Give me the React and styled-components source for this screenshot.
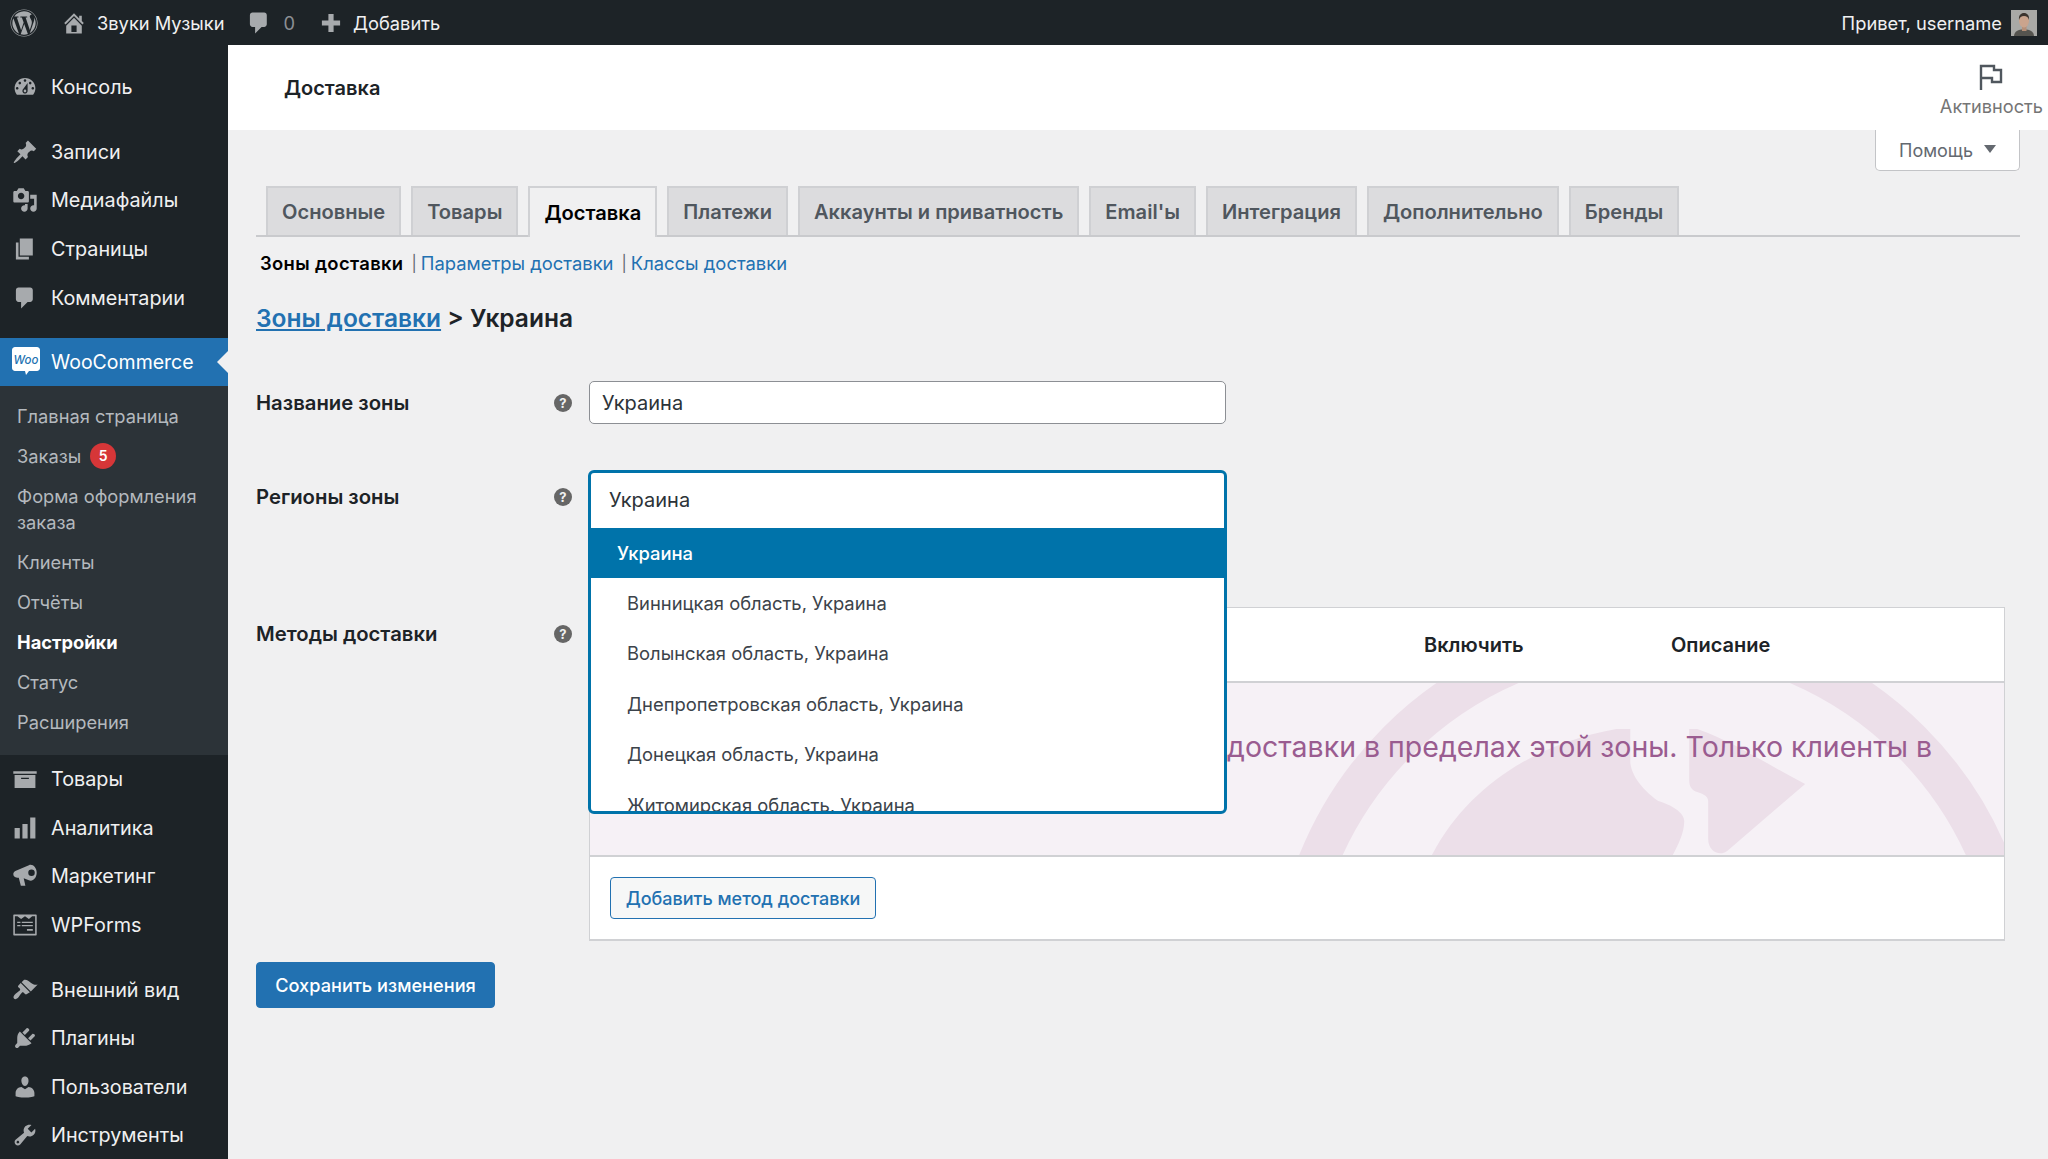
import React from 'react';
import styled, { createGlobalStyle } from 'styled-components';
import { FaWordpress } from 'react-icons/fa';

const GlobalStyle = createGlobalStyle`
  html, body {
    margin: 0;
    height: 100%;
    overflow: hidden;
    background: #f0f0f1;
    font-family: Inter, "Noto Sans", "Liberation Sans", sans-serif;
    -webkit-font-smoothing: antialiased;
  }
  * { box-sizing: border-box; }
`

const ICONS = {
  home: 'M16 8.5l1.53 1.53-1.06 1.06L10 4.62l-6.47 6.47-1.06-1.06L10 2.5l4 4v-2h2v4zm-6-2.46l6 5.99V18H4v-5.97zM12 17v-5H8v5h4z',
  dashboard: 'M3.76 16h12.48c1.1-1.37 1.76-3.11 1.76-5 0-4.42-3.58-8-8-8s-8 3.58-8 8c0 1.89.66 3.63 1.76 5zM10 4c.55 0 1 .45 1 1s-.45 1-1 1-1-.45-1-1 .45-1 1-1zM6 6c.55 0 1 .45 1 1s-.45 1-1 1-1-.45-1-1 .45-1 1-1zm8 0c.55 0 1 .45 1 1s-.45 1-1 1-1-.45-1-1 .45-1 1-1zm-5.37 5.55L12 7v6c0 1.1-.9 2-2 2s-2-.9-2-2c0-.57.24-1.08.63-1.45zM4 10c.55 0 1 .45 1 1s-.45 1-1 1-1-.45-1-1 .45-1 1-1zm12 0c.55 0 1 .45 1 1s-.45 1-1 1-1-.45-1-1 .45-1 1-1zm-5 3c0-.55-.45-1-1-1s-1 .45-1 1 .45 1 1 1 1-.45 1-1z',
  pin: 'M10.44 3.02l1.82-1.82 6.36 6.35-1.83 1.82c-1.05-.68-2.48-.57-3.41.36l-.75.75c-.92.93-1.04 2.35-.35 3.41l-1.83 1.82-2.41-2.41-2.8 2.79c-.42.42-3.38 2.71-3.8 2.29s1.86-3.39 2.28-3.81l2.79-2.79L4.1 9.36l1.83-1.82c1.05.69 2.48.57 3.4-.36l.75-.75c.93-.92 1.05-2.35.36-3.41z',
  media: 'M13 11V4c0-.55-.45-1-1-1h-1.67L9 1H5L3.67 3H2c-.55 0-1 .45-1 1v7c0 .55.45 1 1 1h10c.55 0 1-.45 1-1zM7 4.5c1.38 0 2.5 1.12 2.5 2.5S8.38 9.5 7 9.5 4.5 8.38 4.5 7 5.62 4.5 7 4.5zM14 6h5v10.5c0 1.38-1.12 2.5-2.5 2.5S14 17.88 14 16.5s1.12-2.5 2.5-2.5c.17 0 .34.02.5.05V9h-3V6zm-4 8.05V13h2v3.5c0 1.38-1.12 2.5-2.5 2.5S7 17.88 7 16.5 8.12 14 9.5 14c.17 0 .34.02.5.05z',
  pages: 'M6 15V2h10v13H6zm-1 1h8v2H3V5h2v11z',
  comment: 'M5 2h9c1.1 0 2 .9 2 2v7c0 1.1-.9 2-2 2h-2l-5 5v-5H5c-1.1 0-2-.9-2-2V4c0-1.1.9-2 2-2z',
  products: 'M19 4v2H1V4h18zM2 7h16v10H2V7zm11 3V9H7v1h6z',
  analytics: 'M18 18V2h-4v16h4zm-6 0V7H8v11h4zm-6 0v-8H2v8h4z',
  marketing: 'M3 6L13 1.7c2.8-1.200 6 1.800 6 5.800s-3 7-6 5.800L9 11.800 10.300 17.500H6.800L5.200 11.300H4c-2 0-3-1.300-3-2.800C1 7.300 2 6.400 3 6zM15 5a2.500 2.500 0 1 0 .01 5 2.500 2.500 0 1 0-.01-5z',
  forms: 'M1.500 2h17c.3 0 .5.2.5.5v15c0 .3-.2.5-.5.5h-17c-.3 0-.5-.2-.5-.5v-15c0-.3.2-.5.5-.5zm.7 1.200v13.600h15.600V3.200h-2.300L13 5.300l-3-2.100-3 2.100-2.800-2.100H2.200zM4 7.500h2.500v1H4v-1zm3.500 0H16v1H7.500v-1zM4 10h2.500v1H4v-1zm3.500 0H16v1H7.500v-1zm4 3H16v1.500h-4.500V13z',
  brush: 'M14.48 11.06L7.41 3.99l1.5-1.5c.5-.56 2.3-.47 3.51.32 1.21.8 1.43 1.28 2.91 2.1 1.18.64 2.45 1.26 4.45.85zm-.71.71L6.7 4.7 4.93 6.47c-.39.39-.39 1.02 0 1.41l1.06 1.06c.39.39.39 1.03 0 1.42-.6.6-1.43 1.11-2.21 1.69-.35.26-.7.53-1.01.84-1.4 1.400-2 2.600-1.400 3.500.7 1 1.900.900 3.100-.2.500-.5.900-1.200 1.300-1.800.5-.8 1.100-1.600 1.800-2.300.39-.39 1.030-.39 1.420 0l1.060 1.060c.39.39 1.020.39 1.410 0z',
  plugin: 'M13.11 4.36L9.87 7.6 8 5.73l3.24-3.24c.35-.34 1.05-.2 1.56.32.52.51.66 1.21.31 1.55zm-8 1.77l.91-1.12 9.01 9.01-1.19.84c-.71.71-2.63 1.16-3.82 1.16H6.14L4.9 17.26c-.59.59-1.54.59-2.12 0-.59-.58-.59-1.53 0-2.12l1.24-1.24v-3.88c0-1.13.4-3.19 1.09-3.89zm7.26 3.97l3.24-3.24c.34-.35 1.04-.21 1.55.31.52.51.66 1.21.31 1.55l-3.24 3.25z',
  users: 'M10 9.25c-2.27 0-2.73-3.44-2.73-3.44C7 4.02 7.82 2 9.97 2c2.16 0 2.98 2.02 2.71 3.81 0 0-.41 3.44-2.68 3.44zm0 2.57L12.72 10c2.39 0 4.52 2.33 4.52 4.53v2.49s-3.65 1.13-7.24 1.13c-3.65 0-7.24-1.13-7.24-1.13v-2.49c0-2.25 1.94-4.48 4.47-4.48z',
  tools: 'M16.68 9.77c-1.34 1.34-3.3 1.67-4.95.99l-5.41 6.52c-.99.99-2.59.99-3.58 0s-.99-2.59 0-3.57l6.52-5.42c-.68-1.65-.35-3.61.99-4.95 1.28-1.28 3.12-1.62 4.72-1.06l-2.89 2.89 2.82 2.82 2.86-2.87c.53 1.58.18 3.39-1.08 4.67zM3.81 16.21c.4.39 1.04.39 1.43 0 .4-.4.4-1.04 0-1.43-.39-.4-1.03-.4-1.43 0-.39.39-.39 1.03 0 1.43z',
  plus: 'M8 3h4v5h5v4h-5v5H8v-5H3V8h5z',
}

const Dashicon = ({ name, size = 26, color = '#a7aaad' }) => (
  <svg width={size} height={size} viewBox="0 0 20 20" fill={color} style={{ flexShrink: 0 }}>
    <path d={ICONS[name]} />
  </svg>
)

const WooIcon = () => (
  <svg width="28" height="29" viewBox="0 0 28 29" style={{ flexShrink: 0 }}>
    <path d="M3 0h22c1.600 0 3 1.400 3 3v18c0 1.600-1.400 3-3 3h-8l-3 4-1-4H3c-1.600 0-3-1.400-3-3V3c0-1.600 1.400-3 3-3z" fill="#fff" />
    <text x="14" y="16.500" textAnchor="middle" fontSize="11.500" fontWeight="500" fontStyle="italic" fontFamily="Inter, sans-serif" fill="#2271b1">Woo</text>
  </svg>
)

const Avatar = () => (
  <svg width="26" height="26" viewBox="0 0 26 26">
    <rect width="26" height="26" fill="#a9a9a6" />
    <path d="M3 26c.5-5 4-6.500 10-6.500S22.500 21 23 26z" fill="#55544f" />
    <rect x="11" y="16" width="4.500" height="5" fill="#b58f78" />
    <ellipse cx="13" cy="11" rx="5" ry="6.500" fill="#caa48d" />
    <path d="M8 10c-.5-5 2-7 5-7s5.500 2 5 7c-1-3-2-4-5-4s-4 1-5 4z" fill="#3b342e" />
  </svg>
)

const Watermark = () => (
  <WatermarkSvg viewBox="0 0 1415 172" preserveAspectRatio="none">
    <circle cx="1065" cy="315" r="363" fill="none" stroke="#ecdfe9" strokeWidth="40" />
    <path d="M842 173C880 100 950 60 1027 46h14v32c0 10 8 26 28 40 14 4 26 12 26 20 0 12-6 24-12 35z" fill="#ecdfe9" />
    <path d="M1100 46h8c40 14 74 38 108 55l-78 67c-8 6-19 0-19-12v-38c0-6-8-8-11-9-6-2-8-6-8-12z" fill="#ecdfe9" />
  </WatermarkSvg>
)

const Page = styled.div`
  display: flex;
  flex-direction: column;
  height: 100vh;
`

const AdminBar = styled.header`
  display: flex;
  align-items: center;
  flex: 0 0 45px;
  padding: 0 11px 0 10px;
  background: #1d2327;
  color: #f0f0f1;
  font-size: 18.300px;
`

const BarItem = styled.span`
  display: flex;
  align-items: center;
  gap: ${p => p.$gap || 10}px;
  margin-left: ${p => p.$left || 0}px;
`

const BarCount = styled.span`
  color: #8c8f94;
`

const Spacer = styled.div`
  flex: 1;
`

const Body = styled.div`
  display: flex;
  flex: 1;
  min-height: 0;
`

const Sidebar = styled.nav`
  flex: 0 0 228px;
  padding-top: 18px;
  background: #1d2327;
  overflow: hidden;
`

const MenuGroup = styled.div`
  margin-bottom: ${p => p.$last ? 0 : 16}px;
`

const MenuItem = styled.div`
  position: relative;
  display: flex;
  align-items: center;
  gap: ${p => p.$active ? 11 : 13}px;
  height: ${p => p.$active ? 48 : 48.6}px;
  padding-left: 12px;
  font-size: ${p => p.$active ? 19.5 : 19.8}px;
  color: ${p => p.$active ? '#fff' : '#f0f0f1'};
  background: ${p => p.$active ? '#2271b1' : 'transparent'};
`

const ActiveCaret = styled.span`
  position: absolute;
  right: 0;
  top: 50%;
  margin-top: -11px;
  border: 11px solid transparent;
  border-right-color: #f0f0f1;
  border-left-width: 0;
`

const Submenu = styled.div`
  padding: 10px 0 13px;
  background: #2c3338;
`

const SubItem = styled.div`
  display: flex;
  align-items: center;
  gap: 9px;
  padding: 7px 10px 7px 17px;
  font-size: 18.300px;
  line-height: 26px;
  font-weight: ${p => p.$current ? 700 : 400};
  color: ${p => p.$current ? '#fff' : '#b4b9be'};
`

const CountBadge = styled.span`
  display: inline-flex;
  align-items: center;
  justify-content: center;
  width: 26px;
  height: 26px;
  border-radius: 50%;
  background: #d63638;
  color: #fff;
  font-size: 14px;
  font-weight: 600;
`

const Main = styled.main`
  flex: 1;
  min-width: 0;
`

const PageHeader = styled.div`
  display: flex;
  align-items: center;
  justify-content: space-between;
  height: 85px;
  background: #fff;
`

const PageTitle = styled.h1`
  margin: 0 0 0 56px;
  font-size: 20px;
  font-weight: 600;
  color: #1d2327;
`

const ActivityButton = styled.div`
  display: flex;
  flex-direction: column;
  align-items: center;
  gap: 5px;
  padding: 6px 5px 0 0;
  font-size: 18.200px;
  color: #757575;
`

const Content = styled.div`
  padding: 0 28px;
`

const HelpRow = styled.div`
  display: flex;
  justify-content: flex-end;
`

const HelpButton = styled.div`
  display: flex;
  align-items: center;
  gap: 11px;
  height: 41px;
  width: 145px;
  padding-left: 23px;
  background: #fff;
  border: 1px solid #c3c4c7;
  border-top: 0;
  border-radius: 0 0 5px 5px;
  font-size: 18px;
  color: #646970;
`

const HelpCaret = styled.span`
  border: 6px solid transparent;
  border-top: 8px solid #646970;
  border-bottom: 0;
  margin-top: -3px;
`

const TabBar = styled.div`
  display: flex;
  gap: 10px;
  height: 51px;
  margin-top: 15px;
  padding-left: 10px;
  border-bottom: 2px solid #c9cacd;
`

const Tab = styled.div`
  display: flex;
  align-items: center;
  height: ${p => p.$active ? 51 : 49}px;
  padding: 0 14px;
  border: 2px solid ${p => p.$active ? '#d0d1d4' : '#cfd0d3'};
  border-bottom: 0;
  background: ${p => p.$active ? '#f0f0f1' : '#dcdcde'};
  font-size: 20.100px;
  font-weight: 600;
  color: ${p => p.$active ? '#000' : '#50575e'};
`

const SubNav = styled.div`
  display: flex;
  margin: 14px 0 0 4px;
  line-height: 24px;
  font-size: 18.400px;
  color: #646970;
`

const SubNavLink = styled.a`
  color: ${p => p.$current ? '#000' : '#2271b1'};
  font-weight: ${p => p.$current ? 600 : 400};
  letter-spacing: ${p => p.$current ? '.35px' : 0};
  text-decoration: none;
`

const SubNavDivider = styled.span`
  margin: 0 4px 0 8px;
  font-size: 16px;
`

const Heading = styled.h2`
  margin: 28px 0 48px;
  font-size: 24.500px;
  line-height: 30px;
  font-weight: 600;
  color: #1d2327;
`

const HeadingLink = styled.a`
  color: #2271b1;
  text-decoration: underline;
`

const FormRow = styled.div`
  display: grid;
  grid-template-columns: 333px 1fr;
  align-items: ${p => p.$top ? 'start' : 'center'};
  margin-bottom: ${p => p.$space}px;
`

const LabelCell = styled.div`
  display: flex;
  align-items: center;
  justify-content: space-between;
  padding: ${p => p.$top ? 14 : 0}px 17px ${p => p.$lift ? 4 : 0}px 0;
`

const FieldLabel = styled.label`
  font-size: 20.300px;
  font-weight: 600;
  color: #1d2327;
`

const HelpTip = styled.span`
  display: inline-flex;
  align-items: center;
  justify-content: center;
  width: 18px;
  height: 18px;
  border-radius: 50%;
  background: #666;
  color: #f0f0f1;
  font-size: 13px;
  font-weight: 700;
`

const TextField = styled.div`
  display: flex;
  align-items: center;
  width: 637px;
  height: 43px;
  padding: 0 12px;
  background: #fff;
  border: 1px solid #8c8f94;
  border-radius: 5px;
  font-size: 20px;
  color: #2c3338;
`

const SelectWrap = styled.div`
  position: relative;
  width: 639px;
  height: 57px;
  margin-left: -1px;
  z-index: 2;
`

const SelectBox = styled.div`
  position: absolute;
  inset: 0 0 auto 0;
  height: 344px;
  border: 3px solid #0073aa;
  border-radius: 6px;
  background: #fff;
  overflow: hidden;
`

const SelectSearch = styled.div`
  display: flex;
  align-items: center;
  height: 55px;
  padding: 0 0 2px 18px;
  font-size: 20px;
  color: #2c3338;
`

const SelectOption = styled.div`
  display: flex;
  align-items: center;
  height: 50.400px;
  padding: 0 0 1px ${p => p.$selected ? 26 : 36}px;
  font-size: 18.400px;
  background: ${p => p.$selected ? '#0073aa' : 'transparent'};
  color: ${p => p.$selected ? '#fff' : '#3c434a'};
  font-weight: ${p => p.$selected ? 500 : 400};
`

const MethodsTable = styled.div`
  width: 1416px;
  background: #fff;
  border: 1px solid #d0d1d4;
  border-bottom-width: 2px;
`

const TableHead = styled.div`
  display: grid;
  grid-template-columns: 834px 247px 1fr;
  align-items: center;
  height: 75px;
  padding-top: 1px;
  border-bottom: 2px solid #d0d1d4;
  font-size: 20px;
  font-weight: 600;
  color: #1d2327;
`

const BlankState = styled.div`
  position: relative;
  height: 172px;
  background: #f6f1f6;
  overflow: hidden;
`

const WatermarkSvg = styled.svg`
  position: absolute;
  inset: 0;
  width: 100%;
  height: 100%;
`

const BlankText = styled.p`
  position: relative;
  margin: 0;
  padding: 42px 72px 0 48px;
  font-size: 28.500px;
  line-height: 43px;
  text-align: right;
  color: #9a5c90;
`

const BlankHidden = styled.span`
  display: block;
  text-align: left;
`

const TableFoot = styled.div`
  padding: 20px 20px 20px;
  border-top: 2px solid #d0d1d4;
`

const OutlineButton = styled.button`
  display: block;
  width: 266px;
  height: 42px;
  padding: 0;
  background: #f6f7f7;
  border: 1px solid #2271b1;
  border-radius: 4px;
  font: 500 18px Inter, sans-serif;
  color: #2271b1;
`

const SaveButton = styled.button`
  display: block;
  width: 239px;
  height: 46px;
  padding: 0;
  background: #2271b1;
  border: 1px solid #2271b1;
  border-radius: 4px;
  font: 500 18.200px Inter, sans-serif;
  color: #fff;
`

const MENU_GROUPS = [
  [{ icon: 'dashboard', label: 'Консоль' }],
  [
    { icon: 'pin', label: 'Записи' },
    { icon: 'media', label: 'Медиафайлы' },
    { icon: 'pages', label: 'Страницы' },
    { icon: 'comment', label: 'Комментарии' },
  ],
]

const MENU_AFTER = [
  [
    { icon: 'products', label: 'Товары' },
    { icon: 'analytics', label: 'Аналитика' },
    { icon: 'marketing', label: 'Маркетинг' },
    { icon: 'forms', label: 'WPForms' },
  ],
  [
    { icon: 'brush', label: 'Внешний вид' },
    { icon: 'plugin', label: 'Плагины' },
    { icon: 'users', label: 'Пользователи' },
    { icon: 'tools', label: 'Инструменты' },
  ],
]

const SUBMENU = ['Главная страница', 'Заказы', 'Форма оформления заказа', 'Клиенты', 'Отчёты', 'Настройки', 'Статус', 'Расширения']
const TABS = ['Основные', 'Товары', 'Доставка', 'Платежи', 'Аккаунты и приватность', "Email'ы", 'Интеграция', 'Дополнительно', 'Бренды']
const REGIONS = ['Винницкая область, Украина', 'Волынская область, Украина', 'Днепропетровская область, Украина', 'Донецкая область, Украина', 'Житомирская область, Украина']

function MenuList({ items }) {
  return items.map(({ icon, label }) =>
    <MenuItem key={label}>
      <Dashicon name={icon} />
      {label}
    </MenuItem>
  )
}

export default function App() {
  return (
    <Page>
      <GlobalStyle />
      <AdminBar>
        <FaWordpress size={28} color="#a7aaad" />
        <BarItem $left={23} $gap={10}><Dashicon name="home" size={26} />Звуки Музыки</BarItem>
        <BarItem $left={21} $gap={12}><Dashicon name="comment" size={26} /><BarCount>0</BarCount></BarItem>
        <BarItem $left={23} $gap={9}><Dashicon name="plus" size={26} />Добавить</BarItem>
        <Spacer />
        <BarItem $gap={9}>Привет, username<Avatar /></BarItem>
      </AdminBar>

      <Body>
        <Sidebar>
          {MENU_GROUPS.map((items, i) =>
            <MenuGroup key={i}><MenuList items={items} /></MenuGroup>
          )}
          <MenuItem $active>
            <WooIcon />
            WooCommerce
            <ActiveCaret />
          </MenuItem>
          <Submenu>
            {SUBMENU.map(label =>
              <SubItem key={label} $current={label === 'Настройки'}>
                <span>{label}</span>
                {label === 'Заказы' && <CountBadge>5</CountBadge>}
              </SubItem>
            )}
          </Submenu>
          {MENU_AFTER.map((items, i) =>
            <MenuGroup key={i} $last={i === 1}><MenuList items={items} /></MenuGroup>
          )}
        </Sidebar>

        <Main>
          <PageHeader>
            <PageTitle>Доставка</PageTitle>
            <ActivityButton>
              <svg width="24" height="26" viewBox="0 0 24 26" fill="none" stroke="#50575e" strokeWidth="2.400">
                <path d="M2 26V2h13v4h7v12h-9v-4H2" />
              </svg>
              Активность
            </ActivityButton>
          </PageHeader>

          <Content>
            <HelpRow>
              <HelpButton>Помощь<HelpCaret /></HelpButton>
            </HelpRow>

            <TabBar>
              {TABS.map(tab => <Tab key={tab} $active={tab === 'Доставка'}>{tab}</Tab>)}
            </TabBar>

            <SubNav>
              <SubNavLink $current>Зоны доставки</SubNavLink>
              <SubNavDivider>|</SubNavDivider>
              <SubNavLink>Параметры доставки</SubNavLink>
              <SubNavDivider>|</SubNavDivider>
              <SubNavLink>Классы доставки</SubNavLink>
            </SubNav>

            <Heading><HeadingLink>Зоны доставки</HeadingLink> &gt; Украина</Heading>

            <FormRow $space={46}>
              <LabelCell>
                <FieldLabel>Название зоны</FieldLabel>
                <HelpTip>?</HelpTip>
              </LabelCell>
              <TextField>Украина</TextField>
            </FormRow>

            <FormRow $space={80}>
              <LabelCell $lift>
                <FieldLabel>Регионы зоны</FieldLabel>
                <HelpTip>?</HelpTip>
              </LabelCell>
              <SelectWrap>
                <SelectBox>
                  <SelectSearch>Украина</SelectSearch>
                  <SelectOption $selected>Украина</SelectOption>
                  {REGIONS.map(region => <SelectOption key={region}>{region}</SelectOption>)}
                </SelectBox>
              </SelectWrap>
            </FormRow>

            <FormRow $top $space={21}>
              <LabelCell $top>
                <FieldLabel>Методы доставки</FieldLabel>
                <HelpTip>?</HelpTip>
              </LabelCell>
              <MethodsTable>
                <TableHead>
                  <span />
                  <span>Включить</span>
                  <span>Описание</span>
                </TableHead>
                <BlankState>
                  <Watermark />
                  <BlankText>
                    Вы можете добавить несколько методов доставки в пределах этой зоны. Только клиенты в
                    <BlankHidden>зоне смогут увидеть их при заказе.</BlankHidden>
                  </BlankText>
                </BlankState>
                <TableFoot>
                  <OutlineButton>Добавить метод доставки</OutlineButton>
                </TableFoot>
              </MethodsTable>
            </FormRow>

            <SaveButton>Сохранить изменения</SaveButton>
          </Content>
        </Main>
      </Body>
    </Page>
  );
}
